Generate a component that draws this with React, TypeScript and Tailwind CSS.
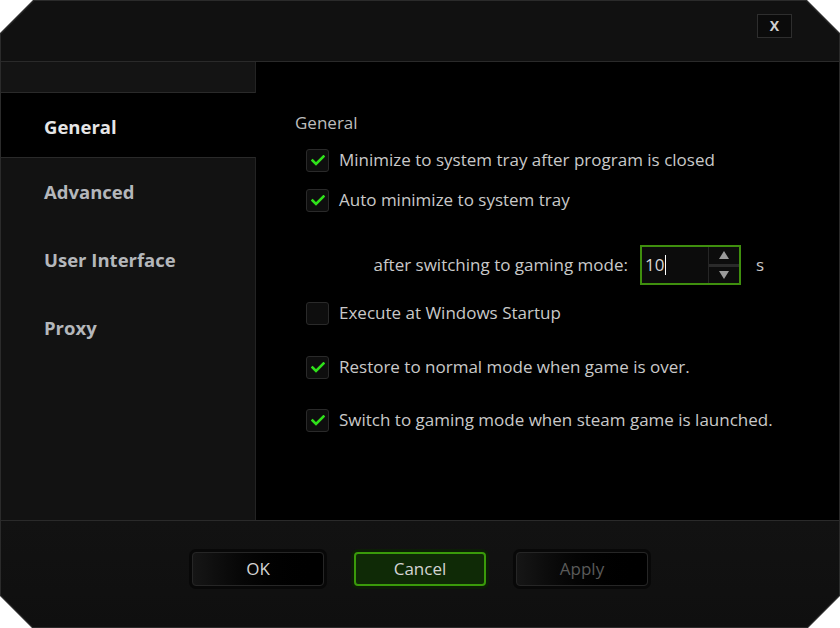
import React, { useState } from 'react';

const clip =
  '[clip-path:polygon(33px_0,calc(100%-33px)_0,100%_33px,100%_calc(100%-32px),calc(100%-32px)_100%,32px_100%,0_calc(100%-32px),0_33px)]';

const Check = () => (
  <svg width="14" height="11" viewBox="0 0 14 11">
    <path d="M1.5 5.5 L5 9 L12.5 1.5" fill="none" stroke="#2fe01a" strokeWidth="2.6" strokeLinecap="square" />
  </svg>
);

const CheckRow = ({ label, checked, className }: { label: string; checked: boolean; className: string }) => (
  <div className={`flex items-center h-[22px] pl-[11px] ${className}`}>
    <div className="w-[23px] h-[23px] rounded-[3px] border border-[#2a2a2a] bg-[#0e0e0e] flex items-center justify-center">
      {checked && <Check />}
    </div>
    <span className="ml-[10px] text-[17px] text-[#c9c9c9] whitespace-nowrap">{label}</span>
  </div>
);

export default function App() {
  const [active] = useState('General');
  const tabs = ['Advanced', 'User Interface', 'Proxy'];

  return (
    <div className="w-[840px] h-[628px] bg-white font-['Open_Sans',sans-serif]">
      <div className={`w-full h-full bg-[#2b2b2b] p-px ${clip}`}>
        <div className={`w-full h-full bg-[#111111] flex flex-col ${clip}`}>
          {/* title bar */}
          <div className="h-[60px] flex justify-end items-start pt-[13px] pr-[47px]">
            <div className="w-[35px] h-[24px] border border-[#2e2e2e] bg-[#0b0b0b] flex items-center justify-center text-[14px] font-bold text-[#d0d0d0] leading-none">
              X
            </div>
          </div>
          <div className="h-px bg-[#2a2a2a]" />

          {/* main */}
          <div className="flex h-[458px]">
            <div className="w-[255px] flex flex-col bg-[#121212] border-r border-[#232323]">
              <div className="h-[31px] bg-[#141414] border-b border-[#2a2a2a]" />
              <div className="h-[64px] bg-black flex items-center pl-[43px] pt-[3px] -mr-px">
                <span className="text-[18.5px] font-bold text-[#e6e6e6]">{active}</span>
              </div>
              <div className="flex-1 border-t border-[#2a2a2a]">
                {tabs.map(t => (
                  <div key={t} className="h-[68px] flex items-center pl-[43px]">
                    <span className="text-[18.5px] font-bold text-[#b4b7bb]">{t}</span>
                  </div>
                ))}
              </div>
            </div>

            <div className="flex-1 bg-black pl-[39px] pt-[51px] flex flex-col">
              <div className="h-[20px] leading-[20px] text-[17px] text-[#bdbdbd]">General</div>
              <CheckRow className="mt-[16px]" checked label="Minimize to system tray after program is closed" />
              <CheckRow className="mt-[18px]" checked label="Auto minimize to system tray" />

              <div className="mt-[34px] flex items-center h-[40px]">
                <div className="w-[333px] text-right text-[17px] text-[#c9c9c9] whitespace-nowrap">after switching to gaming mode:</div>
                <div className="ml-[12px] w-[101px] h-[40px] border-2 border-[#3f8f0e] bg-[#0c0c0c] flex">
                  <div className="flex-1 flex items-center pl-[3px] text-[17px] text-[#d8d8d8]">
                    10<span className="w-px h-[20px] bg-white ml-px" />
                  </div>
                  <div className="w-[31px] border-l border-[#262626] flex flex-col">
                    <div className="flex-1 flex items-center justify-center">
                      <svg width="10" height="8" viewBox="0 0 10 8"><path d="M5 0 L10 8 L0 8 Z" fill="#9a9a9a" /></svg>
                    </div>
                    <div className="h-[3px] bg-[#2a2a2a]" />
                    <div className="flex-1 flex items-center justify-center">
                      <svg width="10" height="8" viewBox="0 0 10 8"><path d="M0 0 L10 0 L5 8 Z" fill="#9a9a9a" /></svg>
                    </div>
                  </div>
                </div>
                <span className="ml-[15px] text-[17px] text-[#c9c9c9]">s</span>
              </div>

              <CheckRow className="mt-[17px]" checked={false} label="Execute at Windows Startup" />
              <CheckRow className="mt-[32px]" checked label="Restore to normal mode when game is over." />
              <CheckRow className="mt-[31px]" checked label="Switch to gaming mode when steam game is launched." />
            </div>
          </div>

          {/* footer */}
          <div className="flex-1 border-t border-[#2a2a2a] flex justify-center items-start pt-[31px] gap-[30px] bg-gradient-to-b from-[#121212] to-[#0f0f0f]">
            <button className="w-[132px] h-[34px] rounded-[4px] border border-[#262626] bg-gradient-to-r from-[#161616] to-black text-[17px] text-[#d4d4d4] shadow-[0_0_0_3px_#080808]">
              OK
            </button>
            <button className="w-[132px] h-[34px] rounded-[4px] border-2 border-[#3a9a0a] bg-[#0f2a06] text-[17px] text-[#d4d4d4] shadow-[0_0_0_3px_#0c1d06]">
              Cancel
            </button>
            <button className="w-[132px] h-[34px] rounded-[4px] border border-[#262626] bg-gradient-to-r from-[#161616] to-black text-[17px] text-[#5a5a5a] shadow-[0_0_0_3px_#080808]">
              Apply
            </button>
          </div>
        </div>
      </div>
    </div>
  );
}
